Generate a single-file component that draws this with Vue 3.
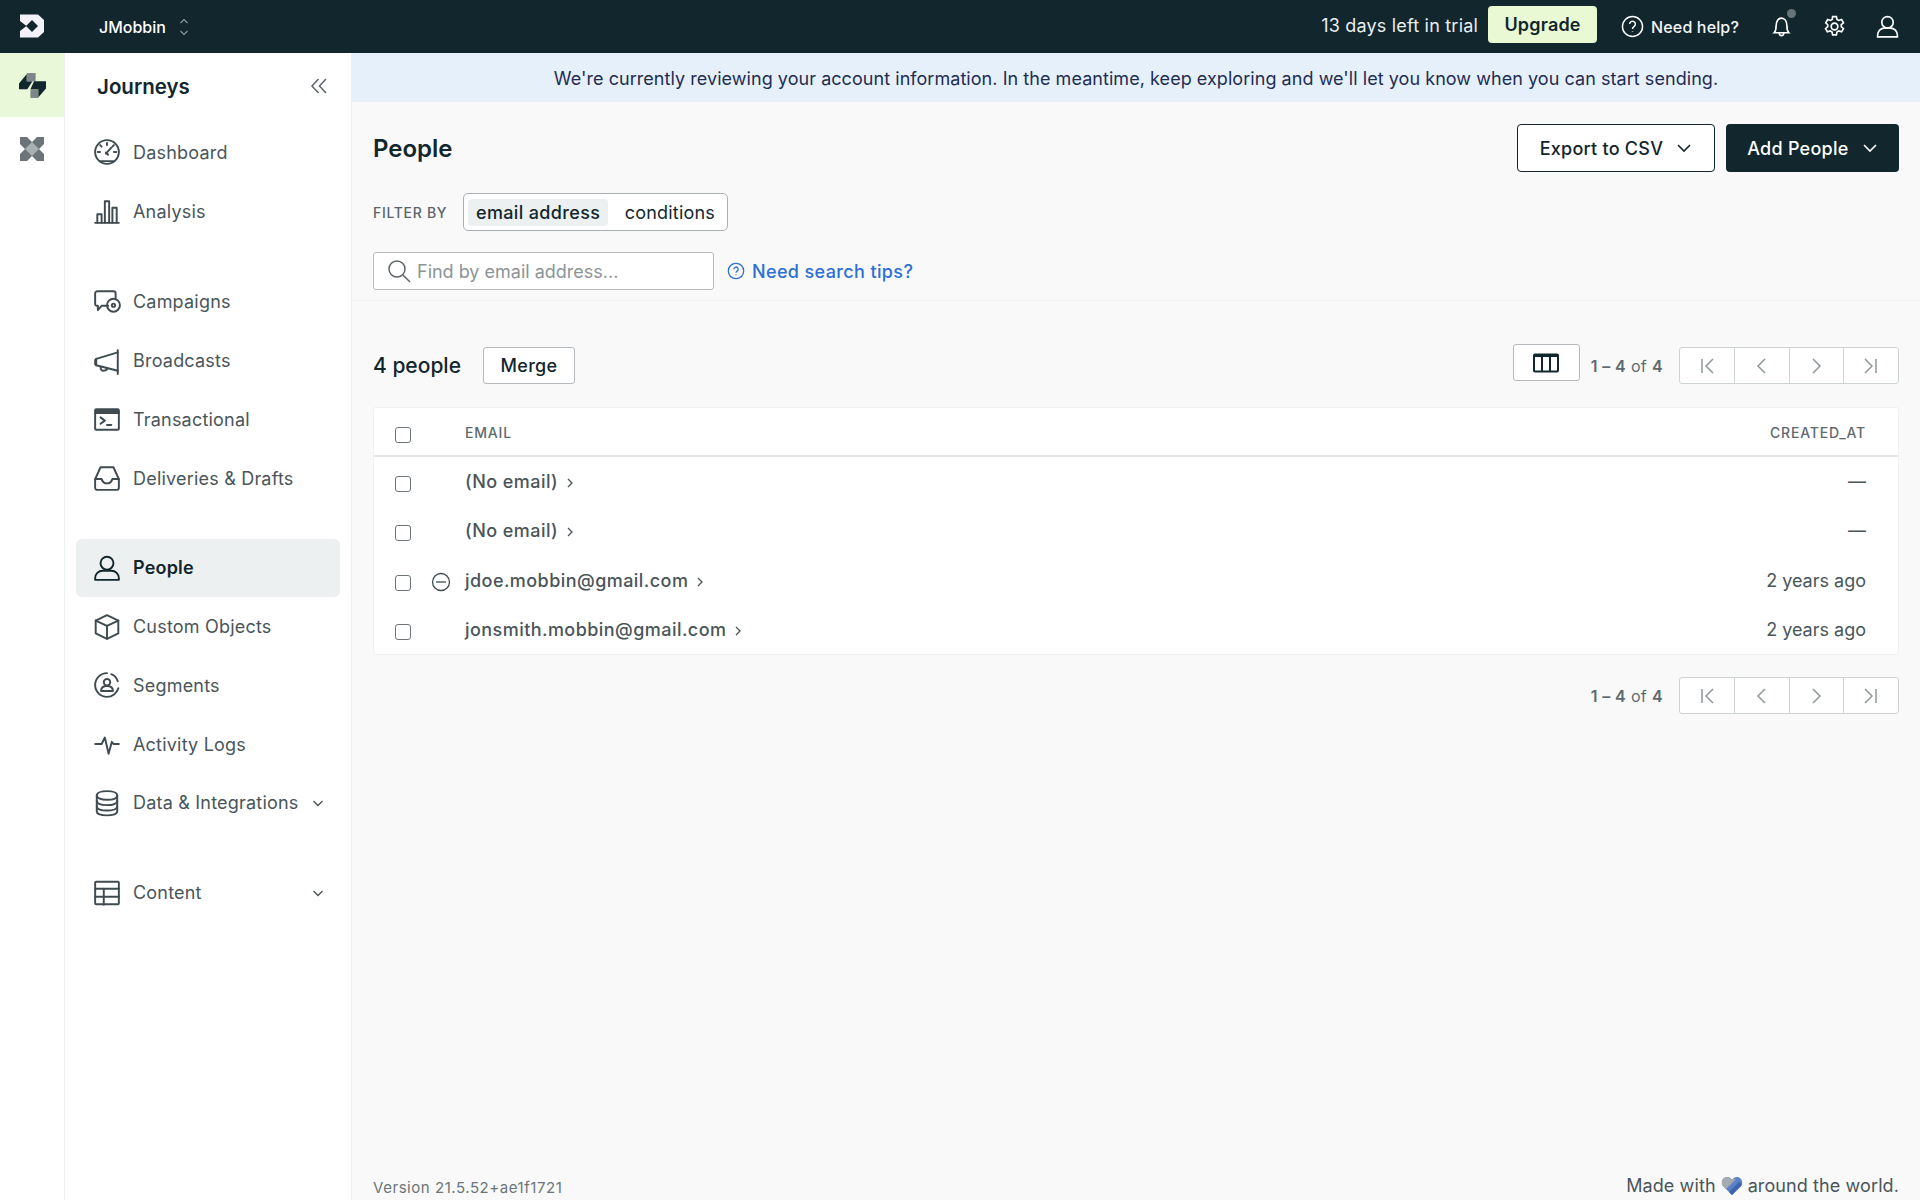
<script setup>
const groups = [
  [
    { label: 'Dashboard', icon: ['M13 2a11 11 0 1 1 0 22a11 11 0 1 1 0-22', 'M7 21.5h12', 'M6.5 13H4.5', 'M21.5 13h-2', 'M13 6.5v-2', 'M8 8l-1.4-1.4', 'M18 8l1.4-1.4', 'M12 14.5L17 9', 'M14 15.5l-2-2'] },
    { label: 'Analysis', icon: ['M2 24h22', 'M4 24V16h4v8', 'M11 24V4h4v20', 'M18 24V10h4v14'] }
  ],
  [
    { label: 'Campaigns', icon: ['M14 16.5H8l-3.5 4v-4H3.5A1.5 1.5 0 0 1 2 15V5a2 2 0 0 1 2-2h15a2 2 0 0 1 2 2v4', 'M19 10a6 6 0 1 1 0 12a6 6 0 1 1 0-12', 'M19 14.5a1.5 1.5 0 1 1 0 3a1.5 1.5 0 1 1 0-3'] },
    { label: 'Broadcasts', icon: ['M23 3v22', 'M23 5L3 11v6l20 5', 'M3 11l-1 1v4l1 1', 'M7 18.5c0 2 1 3.5 3 3.5s3-1 3.5-2'] },
    { label: 'Transactional', icon: ['M3 4h20a1 1 0 0 1 1 1v17a1 1 0 0 1-1 1H3a1 1 0 0 1-1-1V5a1 1 0 0 1 1-1z', 'M2 7.5h22', 'M2 5.5h22', 'M7 11.5l4 3l-4 3', 'M13 18.5h4'] },
    { label: 'Deliveries & Drafts', icon: ['M7 3h12l5 11v8a2 2 0 0 1-2 2H4a2 2 0 0 1-2-2v-8z', 'M2 14h6c1 3 2.500 4 5 4s4-1 5-4h6'] }
  ],
  [
    { label: 'People', active: true, icon: ['M13 2.500a6 6 0 1 1 0 12a6 6 0 1 1 0-12', 'M2 24v-1.500c0-4 3-7 7-7h8c4 0 7 3 7 7V24z'] },
    { label: 'Custom Objects', icon: ['M13 2l10.500 5v12L13 24L2.500 19V7z', 'M2.500 7L13 12l10.500-5', 'M13 12v12'] },
    { label: 'Segments', icon: ['M13 2a11 11 0 0 0 0 22a11 11 0 0 0 10.500-8', 'M17 3a11 11 0 0 1 6 6.500', 'M13 7.500a3 3 0 1 1 0 6a3 3 0 1 1 0-6', 'M7.500 18.500c0-3 2-4.500 5.500-4.500s5.500 1.500 5.500 4.500z'] },
    { label: 'Activity Logs', icon: ['M2 13h6l3-6l3.500 15l3-11l1.500 2h5'] },
    { label: 'Data & Integrations', chevron: true, icon: ['M13 2c5.500 0 9.500 1.500 9.500 4s-4 4-9.500 4s-9.500-1.500-9.500-4s4-4 9.500-4', 'M3.500 6v15c0 2 4 3.500 9.500 3.500s9.500-1.500 9.500-3.500V6', 'M3.500 11c0 2.500 4 4 9.500 4s9.500-1.500 9.500-4', 'M3.500 16c0 2.500 4 4 9.500 4s9.500-1.500 9.500-4'] }
  ],
  [
    { label: 'Content', chevron: true, icon: ['M3 2.500h20a1 1 0 0 1 1 1v19a1 1 0 0 1-1 1H3a1 1 0 0 1-1-1v-19a1 1 0 0 1 1-1z', 'M2 9h22', 'M2 16.500h22', 'M10 9v15'] }
  ]
]

const rows = [
  { email: '(No email)', created: '—' },
  { email: '(No email)', created: '—' },
  { email: 'jdoe.mobbin@gmail.com', created: '2 years ago', suppressed: true },
  { email: 'jonsmith.mobbin@gmail.com', created: '2 years ago' }
]

const pager = [
  ['M7 5v14', 'M18 5l-7 7l7 7'],
  ['M15 5l-7 7l7 7'],
  ['M9 5l7 7l-7 7'],
  ['M6 5l7 7l-7 7', 'M17 5v14']
]
</script>

<template>
  <div class="app">
    <header class="topbar">
      <svg class="logo" viewBox="0 0 24 24" aria-hidden="true">
        <path fill="#f4f2f9" d="M0 0.500H18L24 6V18L18 23.500H0V17L6.500 12L0 7z" />
        <path fill="#12262d" d="M12 6L18 12L12 18L6 12z" />
      </svg>
      <div class="workspace">
        <span>JMobbin</span>
        <svg class="updown" viewBox="0 0 10 18" fill="none"><path d="M1.500 5L5 1.500L8.500 5M1.500 13L5 16.500L8.500 13" /></svg>
      </div>
      <div class="top-right">
        <span class="trial">13 days left in trial</span>
        <button class="upgrade">Upgrade</button>
        <span class="help">
          <svg viewBox="0 0 24 24" fill="none"><circle cx="12" cy="12" r="10.500" /><path d="M9 9.500a3 3 0 1 1 4.500 2.600c-1 .6-1.500 1.200-1.500 2.400M12 17.200v.6" /></svg>
          Need help?
        </span>
        <span class="top-icon bell">
          <svg viewBox="0 0 24 24" fill="none"><path d="M5 18c1.500-1.500 1.800-3 1.800-6.500C6.800 7 9 4 12 4s5.200 3 5.200 7.500c0 3.500.3 5 1.800 6.500zM9.800 18.500c.2 3 4.200 3 4.400 0" /></svg>
          <i class="dot"></i>
        </span>
        <span class="top-icon">
          <svg viewBox="0 0 24 24" fill="none"><circle cx="12" cy="12" r="3.200" /><path d="M10.200 2.500h3.600l.6 2.800 1.700.9 2.700-.9 1.800 3.100-2.100 1.900v1.800l2.100 1.900-1.800 3.100-2.700-.9-1.700 1-.6 2.800h-3.600l-.6-2.800-1.700-1-2.700.9-1.800-3.100 2.100-1.900v-1.800L3.600 8.400l1.800-3.100 2.700.9 1.700-.9z" /></svg>
        </span>
        <span class="top-icon">
          <svg viewBox="0 0 24 24" fill="none"><circle cx="12" cy="8" r="5.500" /><path d="M2.500 22v-1.500c0-4 3-7 6.500-7h6c3.500 0 6.500 3 6.500 7V22z" /></svg>
        </span>
      </div>
    </header>

    <div class="body">
      <nav class="rail">
        <div class="rail-item on">
          <svg viewBox="0 0 26 24" aria-hidden="true">
            <path fill="#12262d" d="M0 10L7.500 1V8H13L8 15.500H0z" />
            <path fill="#7d8689" d="M7.500 0H16V8H7.500z" />
            <path fill="#12262d" d="M14.500 8H26V15L18.500 23.500V15.500H11z" />
            <path fill="#7d8689" d="M11 15.500H18.500V24H11z" />
          </svg>
        </div>
        <div class="rail-item">
          <svg viewBox="0 0 24 24" aria-hidden="true">
            <path fill="#6b7477" d="M0 0h7l5 5l5-5h7v7l-5 5l5 5v7h-7l-5-5l-5 5H0v-7l5-5l-5-5z" />
            <path fill="#a8b0b2" d="M12 5l7 7l-7 7l-7-7z" />
          </svg>
        </div>
      </nav>

      <aside class="side">
        <div class="side-head">
          <h2>Journeys</h2>
          <svg viewBox="0 0 18 18" fill="none"><path d="M8.500 2L2 9l6.500 7M16 2L9.500 9l6.500 7" /></svg>
        </div>
        <div v-for="(group, g) in groups" :key="g" class="group">
          <a v-for="item in group" :key="item.label" class="nav-item" :class="{ active: item.active }">
            <svg class="nav-icon" viewBox="0 0 26 26" fill="none" aria-hidden="true">
              <path v-for="d in item.icon" :key="d" :d="d" />
            </svg>
            <span>{{ item.label }}</span>
            <svg v-if="item.chevron" class="nav-chev" viewBox="0 0 12 12" fill="none"><path d="M1.500 4L6 8.500L10.500 4" /></svg>
          </a>
        </div>
      </aside>

      <main class="main">
        <div class="banner">We're currently reviewing your account information. In the meantime, keep exploring and we'll let you know when you can start sending.</div>

        <section class="filters">
          <div class="title-row">
            <h1>People</h1>
            <div class="actions">
              <button class="btn outline">Export to CSV <svg viewBox="0 0 16 16" fill="none"><path d="M2 5l6 6l6-6" /></svg></button>
              <button class="btn solid">Add People <svg viewBox="0 0 16 16" fill="none"><path d="M2 5l6 6l6-6" /></svg></button>
            </div>
          </div>
          <div class="filter-row">
            <span class="filter-label">FILTER BY</span>
            <div class="toggle">
              <span class="seg on">email address</span>
              <span class="seg">conditions</span>
            </div>
          </div>
          <div class="search-row">
            <label class="search">
              <svg viewBox="0 0 24 24" fill="none"><circle cx="10" cy="10" r="8" /><path d="M16 16l7 7" /></svg>
              <span>Find by email address...</span>
            </label>
            <a class="tips">
              <svg viewBox="0 0 18 18" fill="none"><circle cx="9" cy="9" r="7.700" /><path d="M6.800 7.200a2.200 2.200 0 1 1 3.300 1.900c-.8.500-1.100.9-1.100 1.700M9 12.600v.6" /></svg>
              Need search tips?
            </a>
          </div>
        </section>

        <section class="list">
          <div class="toolbar">
            <strong class="count">4 people</strong>
            <button class="merge">Merge</button>
            <div class="toolbar-right">
              <button class="columns">
                <svg viewBox="0 0 26 20" fill="none"><rect x="1" y="1.500" width="24" height="17" rx="1" /><path d="M1 3h24M9 2v16M17 2v16" /></svg>
              </button>
              <span class="range"><b>1 – 4</b> of <b>4</b></span>
              <div class="pager">
                <button v-for="(p, i) in pager" :key="i"><svg viewBox="0 0 24 24" fill="none"><path v-for="d in p" :key="d" :d="d" /></svg></button>
              </div>
            </div>
          </div>

          <div class="table">
            <div class="thead">
              <input type="checkbox" class="check" />
              <span class="th email-col">EMAIL</span>
              <span class="th">CREATED_AT</span>
            </div>
            <div v-for="(row, i) in rows" :key="i" class="tr">
              <input type="checkbox" class="check" />
              <svg v-if="row.suppressed" class="minus" viewBox="0 0 20 20" fill="none"><circle cx="10" cy="10" r="8.500" /><path d="M5 10h10" /></svg>
              <span class="email-col email">{{ row.email }} <svg viewBox="0 0 10 12" fill="none"><path d="M3 2l4 4l-4 4" /></svg></span>
              <span class="created">{{ row.created }}</span>
            </div>
          </div>

          <div class="bottom-pager">
            <span class="range"><b>1 – 4</b> of <b>4</b></span>
            <div class="pager">
              <button v-for="(p, i) in pager" :key="i"><svg viewBox="0 0 24 24" fill="none"><path v-for="d in p" :key="d" :d="d" /></svg></button>
            </div>
          </div>
        </section>

        <footer class="foot">
          <span class="version">Version 21.5.52+ae1f1721</span>
          <span class="made">Made with
            <svg viewBox="0 0 22 20" aria-hidden="true">
              <path fill="#5b82c9" d="M11 19L2 10C-1 6 2 1 6 1c2 0 4 1 5 3c1-2 3-3 5-3c4 0 7 5 4 9z" />
              <path fill="#a5aaae" d="M11 4C10 2 8 1 6 1C2 1-1 6 2 10l3 3L15 3c-2 0-3 0-4 1z" />
              <path fill="#3f63b0" d="M8 16l10-10l3 2l-1 2l-9 9z" />
            </svg>
            around the world.</span>
        </footer>
      </main>
    </div>
  </div>
</template>

<style scoped>
.app {
  height: 1200px;
  display: flex;
  flex-direction: column;
  overflow: hidden;
  font-family: Inter, "Liberation Sans", sans-serif;
  color: #12262d;
}
button { font-family: inherit; cursor: pointer; }
svg { display: block; flex: none; }

.topbar {
  height: 53px;
  flex: none;
  display: flex;
  align-items: center;
  background: #12262d;
  color: #fff;
}
.logo { width: 24px; height: 24px; margin: 0 0 1px 20px; }
.workspace { display: flex; align-items: center; gap: 13px; margin-left: 55px; font-size: 16px; font-weight: 500; }
.updown { width: 10px; height: 18px; stroke: #8b979b; stroke-width: 1.2; }
.top-right { margin-left: auto; display: flex; align-items: center; }
.trial { font-size: 18px; color: #e9eef0; margin-right: 10px; margin-top: -3px; letter-spacing: .2px; }
.upgrade {
  width: 109px; height: 37px; margin: -4px 0 0 0;
  background: #e9f9d3; color: #12262d; border: 0; border-radius: 4px;
  font-size: 18px; font-weight: 600; letter-spacing: .2px;
}
.help { display: flex; align-items: center; gap: 7px; margin-left: 24px; font-size: 16px; font-weight: 500; color: #f2f5f6; letter-spacing: .15px; }
.help svg { width: 23px; height: 23px; stroke: #fff; stroke-width: 1.500; }
.top-icon { position: relative; margin-left: 28px; width: 25px; height: 25px; }
.top-icon:last-child { margin-right: 20px; }
.help + .top-icon { margin-left: 30px; }
.top-icon svg { width: 25px; height: 25px; stroke: #fff; stroke-width: 1.600; }
.dot { position: absolute; right: -2px; top: -5px; width: 9px; height: 9px; border-radius: 50%; background: #687377; }

.body { flex: 1; display: flex; min-height: 0; }

.rail { width: 64px; flex: none; background: #fff; border-right: 1px solid #eef0f1; }
.rail-item { height: 64px; display: flex; align-items: center; justify-content: center; }
.rail-item svg { width: 24px; height: 24px; }
.rail-item.on { background: #e9f8d8; }
.rail-item.on svg { width: 27px; height: 25px; }

.side { width: 287px; flex: none; background: #fff; border-right: 1px solid #eef0f1; padding: 0 11px; box-sizing: border-box; }
.side-head { height: 70px; padding: 0 12px 4px 21px; display: flex; align-items: center; justify-content: space-between; box-sizing: border-box; }
.side-head h2 { margin: 0; font-size: 20.500px; font-weight: 600; }
.side-head svg { width: 18px; height: 18px; stroke: #5c676b; stroke-width: 1.500; }
.group { margin-bottom: 31px; }
.group:nth-child(2) { margin-bottom: 32px; }
.nav-item {
  height: 58.75px;
  display: flex;
  align-items: center;
  gap: 14px;
  padding: 0 16px 0 17px;
  box-sizing: border-box;
  font-size: 18px;
  letter-spacing: .2px;
  white-space: nowrap;
  color: #4a5559;
  border-radius: 6px;
}
.nav-item.active { background: #ecf0f0; color: #12262d; font-weight: 600; }
.nav-icon { width: 28px; height: 28px; margin: 0 -1.500px 0 -.5px; stroke: #3f4b50; stroke-width: 1.800; stroke-linejoin: round; stroke-linecap: round; }
.nav-item.active .nav-icon { stroke: #12262d; }
.nav-chev { width: 12px; height: 12px; margin-left: auto; stroke: #4a5559; stroke-width: 1.400; }

.main { flex: 1; min-width: 0; display: flex; flex-direction: column; background: #f9f9fa; }
.banner {
  height: 49px; flex: none; display: flex; align-items: center; justify-content: center; box-sizing: border-box; padding-top: 1px;
  background: #e6f0fb; color: #1f2d52; font-size: 18px; letter-spacing: .05px;
}
.filters { padding: 22px 21px 10px 21px; border-bottom: 1px solid #eff1f2; }
.title-row { display: flex; align-items: center; justify-content: space-between; height: 48px; }
h1 { margin: 0; font-size: 24px; font-weight: 600; }
.actions { display: flex; gap: 11px; }
.btn {
  height: 48px; display: flex; align-items: center; gap: 13px; padding: 0 21.500px;
  font-size: 18px; font-weight: 500; border-radius: 4px; letter-spacing: .25px;
}
.btn svg { width: 16px; height: 16px; stroke-width: 1.600; }
.outline { background: #fff; color: #12262d; border: 1.500px solid #12262d; }
.outline svg { stroke: #12262d; }
.solid { background: #12262d; color: #fff; border: 0; }
.solid svg { stroke: #fff; }

.filter-row { display: flex; align-items: center; margin-top: 21px; }
.filter-label { font-size: 14px; font-weight: 500; color: #5a6569; letter-spacing: .7px; width: 90px; }
.toggle {
  height: 38px; box-sizing: border-box; display: flex; align-items: center; padding: 0 4px;
  background: #fff; border: 1.500px solid #a9b0b3; border-radius: 5px; font-size: 18px; letter-spacing: .2px;
}
.seg { height: 27px; line-height: 27px; padding: 0 8px; margin-right: 8px; border-radius: 4px; }
.seg:last-child { margin-right: 0; }
.seg.on { background: #ecf0f0; font-weight: 500; letter-spacing: .35px; margin-right: 8.500px; }

.search-row { display: flex; align-items: center; margin-top: 21px; }
.search {
  width: 341px; height: 38px; box-sizing: border-box; display: flex; align-items: center; gap: 6px; padding-left: 13px;
  background: #fff; border: 1.500px solid #b4babd; border-radius: 3px; font-size: 18px; color: #8b9497;
}
.search svg { width: 24px; height: 24px; stroke: #5a6569; stroke-width: 1.500; }
.tips { display: flex; align-items: center; gap: 7px; margin-left: 13px; color: #2b6fd6; font-size: 18px; font-weight: 500; letter-spacing: .37px; }
.tips svg { width: 18px; height: 18px; stroke: #2b6fd6; stroke-width: 1.300; }

.list { padding: 46px 21px 0 21px; }
.toolbar { display: flex; align-items: center; height: 37px; }
.count { font-size: 21px; font-weight: 500; }
.merge {
  width: 92px; height: 37px; margin-left: 22px; background: #fff; color: #12262d;
  border: 1.500px solid #b4babd; border-radius: 3px; font-size: 18px; font-weight: 500; letter-spacing: .3px;
}
.toolbar-right { margin-left: auto; display: flex; align-items: center; }
.columns {
  width: 67px; height: 37px; margin: -6px 11px 0 0; display: flex; align-items: center; justify-content: center;
  background: #fff; border: 1.500px solid #b4babd; border-radius: 3px;
}
.columns svg { width: 26px; height: 20px; stroke: #12262d; stroke-width: 2; }
.range { font-size: 16px; color: #5e696d; margin-right: 16px; letter-spacing: .35px; }
.range b { font-weight: 600; }
.pager { display: flex; width: 220px; height: 37px; box-sizing: border-box; background: #fff; border: 1.500px solid #ced3d5; border-radius: 3px; }
.pager button { flex: 1; display: flex; align-items: center; justify-content: center; padding: 0; background: none; border: 0; border-left: 1.500px solid #ced3d5; }
.pager button:first-child { border-left: 0; }
.pager svg { width: 24px; height: 24px; stroke: #8e979a; stroke-width: 1.500; }

.table { margin-top: 23px; background: #fff; border: 1px solid #eef0f1; border-radius: 3px; }
.thead { height: 47px; display: flex; align-items: center; border-bottom: 2px solid #e2e5e6; padding: 0 32px 0 21px; }
.th { font-size: 14px; font-weight: 500; color: #5e696d; letter-spacing: .8px; margin-top: 2px; }
.check {
  appearance: none; width: 16px; height: 16px; margin: 5px 0 0; flex: none; box-sizing: border-box;
  background: #fff; border: 1.500px solid #6c767a; border-radius: 3px;
}
.thead .check { margin-top: 7px; }
.email-col { margin-left: 54px; }
.thead .th:last-child { margin-left: auto; }
.tr { position: relative; height: 49.25px; display: flex; align-items: center; padding: 0 32px 0 21px; color: #4a5559; font-size: 18px; }
.email { display: flex; align-items: center; gap: 7px; font-weight: 500; letter-spacing: .45px; }
.email svg { width: 10px; height: 12px; stroke: #4a5559; stroke-width: 1.300; margin-top: 3px; }
.created { margin-left: auto; }
.minus { position: absolute; left: 57px; top: 16px; width: 20px; height: 20px; stroke: #3f4b50; stroke-width: 1.300; }

.bottom-pager { display: flex; align-items: center; justify-content: flex-end; margin-top: 22px; }

.foot { margin-top: auto; padding: 0 21px 4px; display: flex; align-items: flex-end; justify-content: space-between; }
.version { font-size: 15px; color: #6b7579; letter-spacing: .55px; margin-bottom: -1px; }
.made { display: flex; align-items: center; gap: 5px; font-size: 18px; color: #4a5559; letter-spacing: .1px; }
.made svg { width: 22px; height: 20px; }
</style>
